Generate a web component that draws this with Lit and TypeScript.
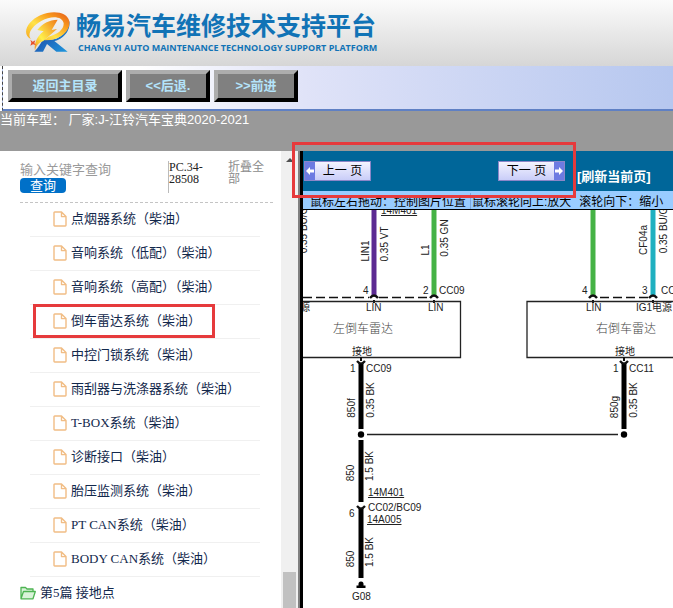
import { LitElement, html, svg, css } from "lit";
import { customElement, property } from "lit/decorators.js";
import { classMap } from "lit/directives/class-map.js";

@customElement("brand-header")
class BrandHeader extends LitElement {
  static styles = css`
    :host {
      display: flex;
      align-items: flex-start;
      box-sizing: border-box;
      height: 66px;
      padding: 10px 24px 0;
      gap: 4px;
      background: linear-gradient(#fbfbfb, #d6d6d6);
      color: #1173b6;
      font-family: "Liberation Sans", "Noto Sans CJK SC", sans-serif;
    }
    .mark {
      flex: none;
      width: 48px;
      height: 46px;
    }
    .name {
      margin: 0;
      font-size: 25px;
      line-height: 32px;
      font-weight: 700;
      white-space: nowrap;
    }
    .sub {
      margin: 0 2px;
      font-family: "Open Sans", sans-serif;
      font-size: 9px;
      line-height: 12px;
      font-weight: 700;
      white-space: nowrap;
    }
  `;
  render() {
    return html`
      <svg class="mark" viewBox="27 30 144 138" aria-hidden="true">
        <defs>
          <linearGradient id="fire" x1="0" y1="1" x2="1" y2="0">
            <stop offset="0" stop-color="#f7a51c" />
            <stop offset=".4" stop-color="#ffe34a" />
            <stop offset=".7" stop-color="#f99b1c" />
            <stop offset="1" stop-color="#e2571b" />
          </linearGradient>
          <linearGradient id="hot" x1="0" y1="1" x2="1" y2="0">
            <stop offset="0" stop-color="#f08a1a" />
            <stop offset=".35" stop-color="#fff04a" />
            <stop offset="1" stop-color="#f07a1a" />
          </linearGradient>
          <linearGradient id="sea" x1="0" y1="0" x2="1" y2="1">
            <stop offset="0" stop-color="#1e2f96" />
            <stop offset="1" stop-color="#1f9be0" />
          </linearGradient>
        </defs>
        <path fill="url(#sea)" d="M163 62C168 94 142 118 118 123L158 155H124L96 132L84 155H58C70 144 76 132 84 118C130 128 160 96 163 62Z" />
        <path fill="url(#fire)" d="M48 118C20 104 33 66 76 46C112 29 158 35 163 64C167 92 138 116 106 120L88 121L100 110C128 104 147 88 146 70C143 48 108 46 80 62C48 80 36 103 48 118Z" />
        <path fill="url(#hot)" d="M67 90C82 70 102 60 128 59L110 90L126 87L84 124C72 128 62 138 60 152C56 128 68 108 86 94Z" />
        <path fill="#e9512a" d="M46 119L53 125L61 121L58 129L63 136L54 133L46 137L49 128Z" />
      </svg>
      <div>
        <h1 class="name">畅易汽车维修技术支持平台</h1>
        <p class="sub">CHANG YI AUTO MAINTENANCE TECHNOLOGY SUPPORT PLATFORM</p>
      </div>
    `;
  }
}

@customElement("nav-toolbar")
class NavToolbar extends LitElement {
  static styles = css`
    :host {
      display: block;
      font-family: "Liberation Sans", "Noto Sans CJK SC", sans-serif;
      font-size: 13px;
      color: #fff;
    }
    .bar {
      display: flex;
      gap: 4px;
      box-sizing: border-box;
      height: 45px;
      margin-left: 2px;
      padding: 4px 0 0 5px;
      border-left: 1px dashed #444;
      border-bottom: 2px solid #5f80c4;
      background: linear-gradient(90deg, #fff 20%, #e0e3f8 45%, #b6c7ef);
    }
    .btn {
      box-sizing: border-box;
      width: 84px;
      height: 32px;
      padding: 0;
      border: 4px solid;
      border-color: #adadad #000 #000 #adadad;
      background: #808080;
      color: #b4e4fb;
      font: inherit;
      font-weight: 700;
      line-height: 22px;
      white-space: nowrap;
    }
    .wide {
      width: 114px;
    }
    .status {
      box-sizing: border-box;
      height: 40px;
      background: #999;
      line-height: 18px;
      white-space: pre;
    }
  `;
  render() {
    return html`
      <div class="bar">
        <button class="btn wide">返回主目录</button>
        <button class="btn">&lt;&lt;后退.</button>
        <button class="btn">&gt;&gt;前进</button>
      </div>
      <div class="status">当前车型： 厂家:J-江铃汽车宝典2020-2021</div>
    `;
  }
}

@customElement("chapter-tree")
class ChapterTree extends LitElement {
  @property({ attribute: false }) items: string[] = [];
  @property() marked = "";

  static styles = css`
    :host {
      display: flex;
      min-height: 0;
      overflow: hidden;
      background: #fff;
      font-family: "Liberation Serif", "Noto Sans CJK SC", serif;
      font-size: 13px;
      color: #12284c;
    }
    .pane {
      flex: 1;
      min-width: 0;
      padding: 0 8px 0 20px;
    }
    .search {
      display: flex;
      box-sizing: border-box;
      height: 52px;
      padding-top: 10px;
      border-bottom: 1px dashed #c4c4c4;
      line-height: 12px;
    }
    .form {
      flex: 1;
      display: flex;
      flex-direction: column;
      align-items: flex-start;
    }
    .field {
      box-sizing: border-box;
      width: 100%;
      height: 17px;
      margin: 0;
      padding: 0;
      border: 0;
      outline: 0;
      background: none;
      font: inherit;
      font-size: 13px;
      line-height: 17px;
    }
    .field::placeholder {
      color: #9a9a9a;
    }
    .go {
      width: 46px;
      height: 15px;
      padding: 0;
      border: 0;
      border-radius: 4px;
      background: #0070c8;
      color: #fff;
      font: inherit;
      line-height: 14px;
    }
    .code {
      box-sizing: border-box;
      width: 60px;
      height: 32px;
      padding-right: 12px;
      border-left: 1px solid #bbb;
      font-size: 12px;
      color: #222;
    }
    .fold {
      width: 45px;
      color: #8c8c8c;
      font-size: 12px;
      text-decoration: none;
    }
    .list {
      list-style: none;
      margin: 0 13px 0 10px;
      padding: 0;
    }
    .row {
      position: relative;
      box-sizing: border-box;
      height: 34px;
      padding-left: 23px;
      border-bottom: 1px solid #f0f0f0;
    }
    .marked::after {
      content: "";
      position: absolute;
      left: 3px;
      top: -1px;
      width: 176px;
      height: 28px;
      border: 3px solid #e63a3c;
    }
    .link {
      display: flex;
      align-items: center;
      gap: 4px;
      height: 32px;
      color: inherit;
      text-decoration: none;
      white-space: nowrap;
    }
    .link span {
      padding-bottom: 4px;
    }
    .file {
      flex: none;
      width: 14px;
      height: 16px;
    }
    .folder {
      flex: none;
      width: 16px;
      height: 14px;
    }
    .track {
      display: flex;
      flex-direction: column;
      justify-content: space-between;
      align-items: center;
      width: 17px;
      padding-top: 7px;
      box-sizing: border-box;
      background: #f0f0f0;
    }
    .up {
      width: 8px;
      height: 4px;
    }
    .thumb {
      width: 13px;
      height: 36px;
      background: #c1c1c1;
    }
  `;
  render() {
    return html`
      <div class="pane">
        <div class="search">
          <div class="form">
            <input class="field" type="text" aria-label="输入关键字查询" placeholder="输入关键字查询" />
            <button class="go">查询</button>
          </div>
          <div class="code">PC.34-28508</div>
          <a class="fold" href="#">折叠全部</a>
        </div>
        <ul class="list">
          ${this.items.map(
            (t) => html`<li class=${classMap({ row: true, marked: t === this.marked })}>
              <a class="link" href="#">
                <svg class="file" viewBox="0 0 14 16" fill="none" stroke="#f1bd85" stroke-width="1.4" stroke-linejoin="round" aria-hidden="true">
                  <path d="M1.7 1H8.5L13 5.6V14.3Q13 15 12.3 15H1.7Q1 15 1 14.3V1.7Q1 1 1.7 1ZM8.5 1V5.6H13" />
                </svg>
                <span>${t}</span>
              </a>
            </li>`
          )}
        </ul>
        <a class="link" href="#">
          <svg class="folder" viewBox="0 0 16 14" fill="#d9f3d9" stroke="#4db452" stroke-width="1.3" stroke-linejoin="round" aria-hidden="true">
            <path d="M1 12.5V1.5H5.5L7 3H13V5.5M1 12.8L3.5 5.5H15.3L13 12.8Z" />
          </svg>
          <span>第5篇 接地点</span>
        </a>
      </div>
      <div class="track">
        <svg class="up" viewBox="0 0 8 4" aria-hidden="true"><path d="M0 4L4 0L8 4Z" fill="#505050" /></svg>
        <div class="thumb"></div>
      </div>
    `;
  }
}

/* Vertical wire caption, read bottom to top, centred on (x, y). */
const upright = (x: number, y: number, t: string) =>
  svg`<text x=${x} y=${y} text-anchor="middle" transform="rotate(-90 ${x} ${y})">${t}</text>`;
const wire = (x: number, y1: number, y2: number, color: string, w = 5) =>
  svg`<path d="M${x} ${y1}V${y2}" stroke=${color} stroke-width=${w} />`;
const plug = (x: number, y: number) =>
  svg`<path d="M${x - 4} ${y + 2}Q${x} ${y - 3} ${x + 4} ${y + 2}" stroke="#111" stroke-width="2.4" fill="none" /><path d="M${x} ${y + 4}v3" stroke="#111" stroke-width="2" />`;
const socket = (x: number, y: number) =>
  svg`<path d="M${x - 4} ${y - 2}Q${x} ${y + 3} ${x + 4} ${y - 2}" stroke="#111" stroke-width="2.2" fill="none" />`;

@customElement("wiring-view")
class WiringView extends LitElement {
  static styles = css`
    :host {
      display: flex;
      flex-direction: column;
      min-width: 0;
      min-height: 0;
      border-left: 3px solid #000;
      background: #fff;
      font-family: "Liberation Sans", "Noto Sans CJK SC", sans-serif;
    }
    .head {
      display: flex;
      height: 40px;
      gap: 12px;
      background: #069;
    }
    .pager {
      position: relative;
      display: flex;
      flex: none;
      box-sizing: border-box;
      width: 262px;
      padding: 10px 0 0 1px;
      justify-content: space-between;
      align-items: flex-start;
    }
    .pager::after {
      content: "";
      position: absolute;
      z-index: 1;
      inset: -9px -11px -7px -11px;
      border: 3px solid #e63a3c;
      pointer-events: none;
    }
    .page {
      display: flex;
      box-sizing: border-box;
      width: 67px;
      height: 20px;
      padding: 0;
      border: 1px solid #8b86c8;
      background: linear-gradient(#f4f4ff, #c9cdf8);
      color: #000;
      font: inherit;
      font-size: 12px;
      line-height: 18px;
      white-space: nowrap;
    }
    .page span {
      flex: 1;
    }
    .arrow {
      width: 10px;
      height: 18px;
      background: #6d7be2;
    }
    .reload {
      padding-top: 18px;
      color: #fff;
      font-size: 13px;
      line-height: 16px;
      font-weight: 700;
      text-decoration: none;
      white-space: nowrap;
    }
    .hint {
      display: flex;
      box-sizing: border-box;
      height: 19px;
      padding: 2px 7px 0;
      gap: 8px;
      border-bottom: 1px solid #000;
      background: #99ccff;
      color: #000;
      font-size: 12px;
      line-height: 18px;
      white-space: nowrap;
    }
    .lead {
      border-left: 1px solid #7aa6dc;
      padding-left: 1px;
      margin-left: -4px;
    }
    .canvas {
      flex: 1;
      min-height: 0;
      overflow: hidden;
    }
    .drawing {
      display: block;
      font-family: "Liberation Sans", "Noto Sans CJK SC", sans-serif;
      font-size: 10px;
      fill: #222;
    }
    .device {
      font-family: "Noto Sans CJK SC", sans-serif;
      font-size: 12px;
      font-weight: 300;
      fill: #444;
    }
    .ref {
      text-decoration: underline;
    }
  `;
  render() {
    return html`
      <div class="head">
        <div class="pager">
          <button class="page">
            <svg class="arrow" viewBox="0 0 10 18" aria-hidden="true"><path d="M1 9L5 5V7.5H9V10.5H5V13Z" fill="#fff" /></svg>
            <span>上一 页</span>
          </button>
          <button class="page">
            <span>下一 页</span>
            <svg class="arrow" viewBox="0 0 10 18" aria-hidden="true"><path d="M9 9L5 5V7.5H1V10.5H5V13Z" fill="#fff" /></svg>
          </button>
        </div>
        <a class="reload" href="#">[刷新当前页]</a>
      </div>
      <div class="hint">
        <span>鼠标左右拖动：控制图片位置</span>
        <span class="lead">鼠标滚轮向上:放大</span>
        <span>滚轮向下：缩小</span>
      </div>
      <div class="canvas">
        <svg class="drawing" width="400" height="420" viewBox="303 210 400 420" role="img" aria-label="倒车雷达">
          ${wire(374, 210, 295, "#5c2a92")} ${wire(434, 210, 295, "#45b245")}
          ${wire(593, 210, 295, "#45b245")} ${wire(653, 210, 295, "#1fb0c0")}
          ${plug(374, 296)} ${plug(434, 296)} ${plug(593, 296)} ${plug(653, 296)}
          <path d="M303 297.5H369M379 297.5H429M600 297.5H648" stroke="#111" stroke-width="1.4" stroke-dasharray="9 4" />
          <path d="M303 301.5H460.5V357.5H303M703 301.5H527V357.5H703" fill="none" stroke="#222" stroke-width="1.3" />
          <path d="M367 434.5H618" stroke="#222" stroke-width="1.4" />
          ${wire(361, 363, 429, "#000")} ${wire(361, 440, 503, "#000")} ${wire(361, 508, 578, "#000")}
          ${wire(624, 363, 429, "#000")}
          ${socket(361, 363)} ${socket(624, 363)}
          <path d="M361 357v4M624 357v4" stroke="#111" stroke-width="2" />
          <path d="M355 504h12" stroke="#fff" stroke-width="4" />
          ${socket(361, 508)}
          <circle cx="361" cy="434.5" r="3.2" fill="#000" /><circle cx="624" cy="434.5" r="3.2" fill="#000" />
          <path d="M356.5 588v-2.500h2q-.5-4 2.500-4t2.500 4h2v2.500z" fill="#000" />
          ${upright(307, 230, "0.35 BU/G")} ${upright(369, 251, "LIN1")} ${upright(388, 244, "0.35 VT")}
          ${upright(429, 250, "L1")} ${upright(448, 238, "0.35 GN")} ${upright(647, 240, "CF04a")}
          ${upright(667, 230, "0.35 BU/G")}
          <text class="ref" x="381" y="214">14M401</text>
          <text x="363" y="294">4</text><text x="423" y="294">2</text><text x="439" y="294">CC09</text>
          <text x="582" y="294">4</text><text x="642" y="294">3</text><text x="661" y="294">CC11</text>
          <text x="300" y="311">源</text>
          <text x="366" y="311">LIN</text><text x="428" y="311">LIN</text>
          <text x="586" y="311">LIN</text><text x="636" y="311">IG1电源</text>
          <text class="device" x="333" y="333">左倒车雷达</text>
          <text class="device" x="596" y="333">右倒车雷达</text>
          <text x="352" y="355">接地</text><text x="615" y="355">接地</text>
          <text x="350" y="372">1</text><text x="366" y="372">CC09</text>
          <text x="613" y="372">1</text><text x="629" y="372">CC11</text>
          ${upright(355, 408, "850f")} ${upright(374, 400, "0.35 BK")}
          ${upright(618, 407, "850g")} ${upright(637, 400, "0.35 BK")}
          ${upright(354, 473, "850")} ${upright(373, 466, "1.5 BK")}
          <text class="ref" x="368" y="496">14M401</text>
          <text x="349" y="517">6</text><text x="368" y="511">CC02/BC09</text>
          <text class="ref" x="367" y="523">14A005</text>
          ${upright(354, 559, "850")} ${upright(373, 552, "1.5 BK")}
          <text x="352" y="600">G08</text>
        </svg>
      </div>
    `;
  }
}

@customElement("app-root")
class AppRoot extends LitElement {
  static styles = css`
    :host {
      display: flex;
      flex-direction: column;
      height: 100vh;
      overflow: hidden;
    }
    .work {
      flex: 1;
      min-height: 0;
      display: grid;
      grid-template-columns: 298px 2px minmax(0, 1fr);
    }
    .split {
      background: #808080;
    }
  `;
  private chapters = [
    "点烟器系统（柴油）",
    "音响系统（低配）（柴油）",
    "音响系统（高配）（柴油）",
    "倒车雷达系统（柴油）",
    "中控门锁系统（柴油）",
    "雨刮器与洗涤器系统（柴油）",
    "T-BOX系统（柴油）",
    "诊断接口（柴油）",
    "胎压监测系统（柴油）",
    "PT CAN系统（柴油）",
    "BODY CAN系统（柴油）",
  ];
  render() {
    return html`
      <brand-header></brand-header>
      <nav-toolbar></nav-toolbar>
      <div class="work">
        <chapter-tree .items=${this.chapters} marked="倒车雷达系统（柴油）"></chapter-tree>
        <div class="split"></div>
        <wiring-view></wiring-view>
      </div>
    `;
  }
}
